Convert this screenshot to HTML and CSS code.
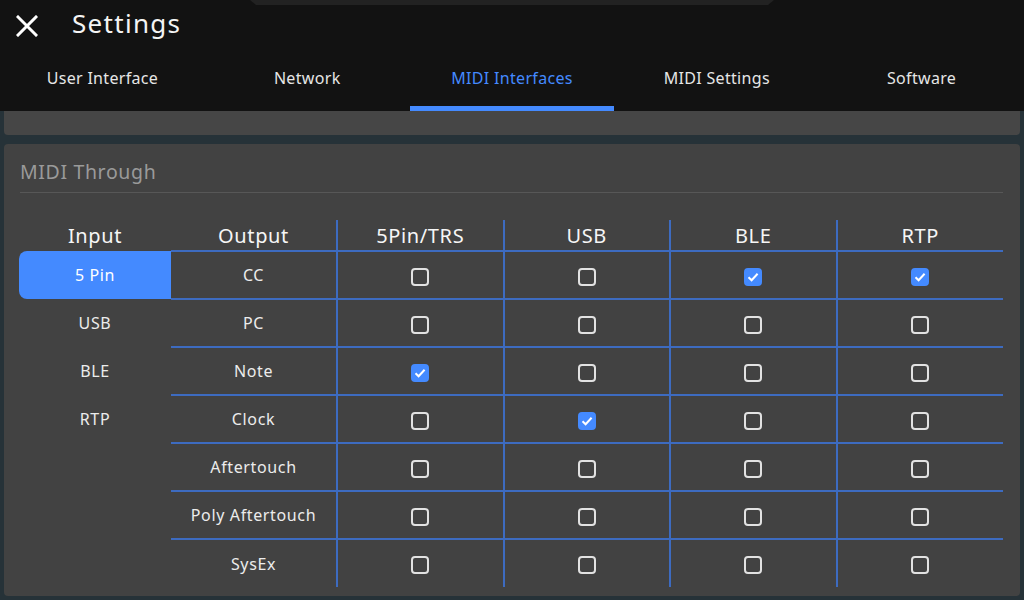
FILE: index.html
```html
<!DOCTYPE html>
<html lang="en">
<head>
  <meta charset="UTF-8" />
  <meta name="viewport" content="width=device-width, initial-scale=1.0"/>
  <title>Settings</title>
  <link rel="stylesheet" href="styles.css">
</head>
<body>

  <header class="appbar">
    <div class="notch"></div>
    <div class="titleRow">
      <button class="closeBtn" type="button" aria-label="Close">
        <svg width="22" height="22" viewBox="0 0 22 22">
          <path d="M2 2 L20 20 M20 2 L2 20" stroke="#fff" stroke-width="3" stroke-linecap="square"/>
        </svg>
      </button>
      <h1 class="pageTitle">Settings</h1>
    </div>
    <nav class="tabs">
      <div class="tab">User Interface</div>
      <div class="tab">Network</div>
      <div class="tab active">MIDI Interfaces</div>
      <div class="tab">MIDI Settings</div>
      <div class="tab">Software</div>
    </nav>
  </header>

  <main class="content">
    <section class="card stub"></section>

    <section class="card">
      <h2 class="cardTitle">MIDI Through</h2>

      <table class="routing">
        <thead>
          <tr>
            <th class="inCol">Input</th>
            <th class="outCol">Output</th>
            <th class="chk">5Pin/TRS</th>
            <th class="chk">USB</th>
            <th class="chk">BLE</th>
            <th class="chk">RTP</th>
          </tr>
        </thead>
        <tbody id="routingBody"></tbody>
      </table>
    </section>
  </main>

  <script>
    const inputs = ["5 Pin", "USB", "BLE", "RTP"];
    const messages = ["CC", "PC", "Note", "Clock", "Aftertouch", "Poly Aftertouch", "SysEx"];
    // routes enabled for the selected input: [message][5pin, usb, ble, rtp]
    const routes = [
      [0, 0, 1, 1],
      [0, 0, 0, 0],
      [1, 0, 0, 0],
      [0, 1, 0, 0],
      [0, 0, 0, 0],
      [0, 0, 0, 0],
      [0, 0, 0, 0]
    ];
    const body = document.getElementById('routingBody');

    messages.forEach((msg, i) => {
      const tr = document.createElement('tr');

      const inCell = document.createElement('td');
      inCell.className = 'inCol';
      if (inputs[i]) {
        inCell.textContent = inputs[i];
        if (i === 0) inCell.classList.add('selected');
      }
      tr.appendChild(inCell);

      const outCell = document.createElement('td');
      outCell.className = 'outCol';
      outCell.textContent = msg;
      tr.appendChild(outCell);

      routes[i].forEach(on => {
        const td = document.createElement('td');
        td.className = 'chk';
        const box = document.createElement('span');
        box.className = on ? 'box checked' : 'box';
        if (on) {
          box.innerHTML = '<svg width="14" height="14" viewBox="0 0 14 14"><path d="M2.5 7.2 L5.6 10.2 L11.6 3.8" fill="none" stroke="#fff" stroke-width="2"/></svg>';
        }
        td.appendChild(box);
        tr.appendChild(td);
      });

      body.appendChild(tr);
    });
  </script>
</body>
</html>
```

FILE: styles.css
```css
* {
  box-sizing: border-box;
}

body {
  margin: 0;
  background-color: #263238;
  font-family: "Noto Sans", "DejaVu Sans", sans-serif;
  letter-spacing: 0.04em;
  color: #ececec;
  height: 600px;
  overflow: hidden;
}

.appbar {
  position: relative;
  background-color: #121212;
  height: 111px;
}

.notch {
  position: absolute;
  top: 0;
  left: 250px;
  width: 524px;
  height: 5px;
  background-color: #222222;
  clip-path: polygon(0 0, 100% 0, calc(100% - 6px) 100%, 6px 100%);
}

.titleRow {
  display: flex;
  align-items: center;
  height: 50px;
  padding-left: 16px;
}

.closeBtn {
  background: none;
  border: none;
  padding: 0;
  width: 22px;
  height: 22px;
  margin-top: 2px;
  cursor: pointer;
}

.pageTitle {
  margin: 0 0 4px 34px;
  font-size: 26px;
  font-weight: 400;
  letter-spacing: 0.05em;
  color: #f4f4f4;
}

.tabs {
  display: grid;
  grid-template-columns: repeat(5, 1fr);
  height: 61px;
}

.tab {
  display: flex;
  align-items: center;
  justify-content: center;
  font-size: 16px;
  letter-spacing: 0.02em;
  color: #e6e6e6;
  border-bottom: 5px solid transparent;
}

.tab.active {
  color: #448aff;
  border-bottom-color: #448aff;
}

.content {
  padding: 0 4px;
}

.card {
  background-color: #424242;
  border-radius: 4px;
}

.stub {
  height: 24px;
  margin-bottom: 9px;
  border-radius: 0 0 4px 4px;
  background-color: #464646;
}

.card:not(.stub) {
  height: 452px;
  padding: 14px 16px 0 15px;
}

.cardTitle {
  margin: 0 1px 0 1px;
  padding-bottom: 7px;
  font-size: 19.5px;
  font-weight: 400;
  color: #9a9a9a;
  border-bottom: 1px solid #575757;
}

.routing {
  margin-top: 27px;
  width: 984px;
  border-collapse: collapse;
  table-layout: fixed;
}

.routing th {
  height: 31px;
  font-size: 20px;
  font-weight: 400;
  color: #f6f6f6;
  padding: 0;
  vertical-align: middle;
}

.routing td {
  height: 48px;
  padding: 0;
  text-align: center;
  vertical-align: middle;
  font-size: 16px;
  color: #ececec;
}

.routing .inCol {
  width: 152px;
}

.routing .outCol {
  width: 166px;
}

.routing tbody .outCol,
.routing tbody .chk {
  border-top: 2px solid #3d6bc0;
}

.routing .chk {
  border-left: 2px solid #3d6bc0;
}

.routing td.selected {
  background-color: #448aff;
  color: #ffffff;
  border-radius: 8px 0 0 8px;
}

.box {
  display: inline-block;
  width: 18px;
  height: 18px;
  border: 2px solid #e2e2e2;
  border-radius: 4px;
  vertical-align: middle;
  position: relative;
}

.box.checked {
  background-color: #448aff;
  border-color: #448aff;
}

.box svg {
  position: absolute;
  left: 0;
  top: 0;
}
```
